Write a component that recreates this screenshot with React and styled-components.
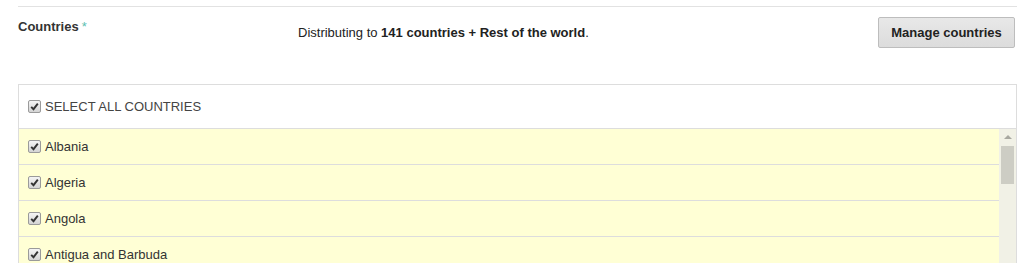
import React from "react";
import styled, { createGlobalStyle } from "styled-components";

const GlobalStyle = createGlobalStyle`
  body {
    margin: 0;
    background: #fff;
    font-family: "Liberation Sans", Arial, sans-serif;
    color: #333;
  }
`;

const Page = styled.div`
  padding: 6px 16px 0 18px;
  height: 263px;
  overflow: hidden;
  box-sizing: border-box;
`;

const Section = styled.div`
  border-top: 1px solid #e2e2e2;
`;

const Header = styled.div`
  display: flex;
  align-items: flex-start;
  padding-top: 10px;
  height: 67px;
`;

const Label = styled.div`
  width: 280px;
  padding-top: 2px;
  font-size: 13px;
  font-weight: bold;
  color: #333;
  line-height: 16px;
`;

const Required = styled.span`
  color: #5bc0b0;
  font-weight: normal;
  margin-left: 3px;
`;

const Summary = styled.div`
  flex: 1;
  font-size: 13px;
  color: #222;
  padding-top: 8px;
  line-height: 16px;
`;

const Button = styled.button`
  font-family: inherit;
  font-size: 13px;
  font-weight: bold;
  color: #222;
  background: linear-gradient(#e8e8e8, #dcdcdc);
  border: 1px solid #bdbdbd;
  border-radius: 2px;
  height: 31px;
  width: 137px;
  margin-right: 2px;
  padding: 0;
  cursor: pointer;
`;

const Panel = styled.div`
  border: 1px solid #dddddd;
`;

const AllRow = styled.div`
  display: flex;
  align-items: center;
  height: 43px;
  padding-left: 9px;
  border-bottom: 1px solid #dddddd;
  font-size: 13px;
  color: #444;
  text-transform: uppercase;
`;

const ListArea = styled.div`
  display: flex;
  height: 140px;
  overflow: hidden;
`;

const Rows = styled.div`
  flex: 1;
  background: #ffffd5;
`;

const Row = styled.div`
  display: flex;
  align-items: center;
  height: 35px;
  padding-left: 9px;
  border-bottom: 1px solid #dddddd;
  font-size: 13px;
  color: #333;
`;

const Scrollbar = styled.div`
  width: 17px;
  background: #f1f1e6;
  display: flex;
  flex-direction: column;
  align-items: center;
`;

const Arrow = styled.div`
  width: 0;
  height: 0;
  margin-top: 6px;
  border-left: 4px solid transparent;
  border-right: 4px solid transparent;
  border-bottom: 4px solid #a8a8a0;
`;

const Thumb = styled.div`
  width: 13px;
  height: 38px;
  margin-top: 7px;
  background: #cdcdc4;
`;

const Box = styled.span`
  display: inline-flex;
  align-items: center;
  justify-content: center;
  width: 11px;
  height: 11px;
  margin-right: 4px;
  border: 1px solid #9a9a9a;
  border-radius: 2px;
  background: linear-gradient(#f4f4f4, #d4d4d4);
  flex-shrink: 0;
`;

function Check() {
  return (
    <Box>
      <svg width="9" height="9" viewBox="0 0 9 9">
        <path d="M1.2 4.8 L3.5 7.2 L7.8 1.6" fill="none" stroke="#333" strokeWidth="1.9" />
      </svg>
    </Box>
  );
}

const countries = ["Albania", "Algeria", "Angola", "Antigua and Barbuda", "Argentina"];

export default function App() {
  return (
    <>
      <GlobalStyle />
      <Page>
        <Section>
          <Header>
            <Label>
              Countries<Required>*</Required>
            </Label>
            <Summary>
              Distributing to <b>141 countries + Rest of the world</b>.
            </Summary>
            <Button>Manage countries</Button>
          </Header>
          <Panel>
            <AllRow>
              <Check />
              Select all countries
            </AllRow>
            <ListArea>
              <Rows>
                {countries.map((c) => (
                  <Row key={c}>
                    <Check />
                    {c}
                  </Row>
                ))}
              </Rows>
              <Scrollbar>
                <Arrow />
                <Thumb />
              </Scrollbar>
            </ListArea>
          </Panel>
        </Section>
      </Page>
    </>
  );
}
